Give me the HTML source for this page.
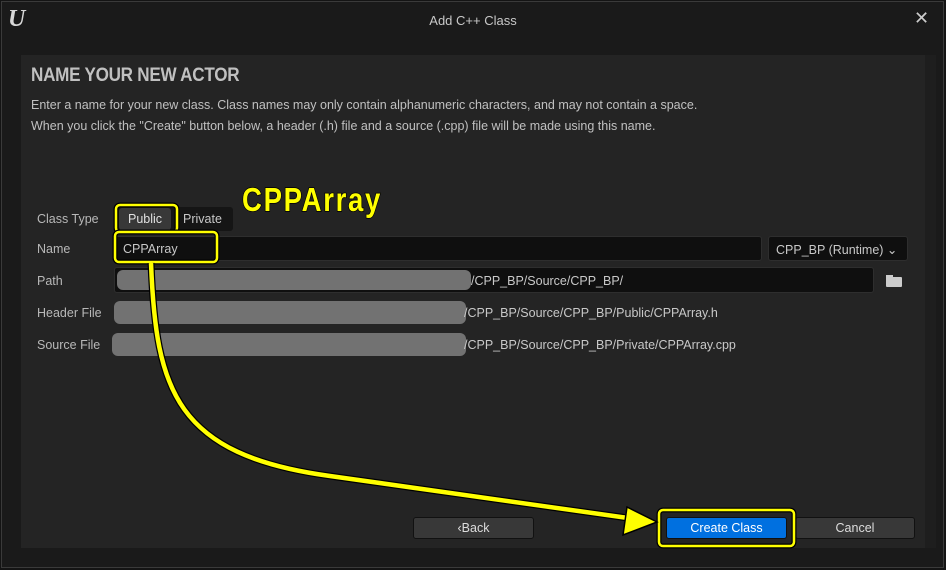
<!DOCTYPE html>
<html><head><style>
body{margin:0;width:946px;height:570px;background:#141414;font-family:"Liberation Sans",sans-serif;overflow:hidden;position:relative}
.win{position:absolute;left:1px;top:1px;width:943px;height:567px;background:#1a1a1a;border:1px solid #3a3a3a;box-sizing:border-box}
.abs{position:absolute}
.title{left:0;right:0;top:13px;text-align:center;color:#c8c8c8;font-size:13px}
.panel{left:21px;top:55px;width:904px;height:493px;background:#242424}
.strip{left:925px;top:55px;width:11px;height:493px;background:#1e1e1e}
h1{position:absolute;left:31px;top:65px;margin:0;font-size:19px;color:#c0c0c0;font-weight:bold;letter-spacing:-0.3px;transform:scaleX(0.9);transform-origin:left}
.desc{left:31px;color:#c0c0c0;font-size:12.5px}
.lbl{left:37px;color:#b8b8b8;font-size:12.5px}
.field{background:#0f0f0f;border:1px solid #2e2e2e;border-radius:3px;box-sizing:border-box}
.blur{background:#727272;border-radius:6px}
.txt{color:#c8c8c8;font-size:12.5px}
.btn{background:#383838;border:1px solid #111;border-radius:3px;color:#ddd;font-size:12.5px;text-align:center;box-sizing:border-box;line-height:20px}
</style></head><body>
<div class="win">
</div>
<div class="abs" style="left:8px;top:6px;color:#d8d8d8;font:bold 24px 'Liberation Serif',serif;font-style:italic">U</div>
<div class="abs title">Add C++ Class</div>
<div class="abs" style="left:914px;top:8px;color:#ccc;font-size:18px">✕</div>
<div class="abs panel"></div>
<div class="abs strip"></div>
<h1>NAME YOUR NEW ACTOR</h1>
<div class="abs desc" style="top:98px">Enter a name for your new class. Class names may only contain alphanumeric characters, and may not contain a space.</div>
<div class="abs desc" style="top:119px">When you click the "Create" button below, a header (.h) file and a source (.cpp) file will be made using this name.</div>

<div class="abs lbl" style="top:212px">Class Type</div>
<div class="abs lbl" style="top:242px">Name</div>
<div class="abs lbl" style="top:274px">Path</div>
<div class="abs lbl" style="top:306px">Header File</div>
<div class="abs lbl" style="top:338px">Source File</div>

<div class="abs" style="left:117px;top:207px;width:116px;height:24px;background:#151515;border-radius:3px"></div>
<div class="abs" style="left:119px;top:208px;width:52px;height:22px;background:#383838;border-radius:3px"></div>
<div class="abs txt" style="left:128px;top:212px;color:#e0e0e0">Public</div>
<div class="abs txt" style="left:183px;top:212px">Private</div>

<div class="abs field" style="left:114px;top:236px;width:648px;height:25px"></div>
<div class="abs txt" style="left:123px;top:242px">CPPArray</div>
<div class="abs field" style="left:768px;top:236px;width:140px;height:25px"></div>
<div class="abs txt" style="left:776px;top:242px">CPP_BP (Runtime) ⌄</div>

<div class="abs field" style="left:114px;top:267px;width:760px;height:26px"></div>
<div class="abs blur" style="left:117px;top:270px;width:354px;height:20px"></div>
<div class="abs txt" style="left:471px;top:274px">/CPP_BP/Source/CPP_BP/</div>
<div class="abs" style="left:886px;top:277px;width:16px;height:10px;background:#ccc;border-radius:1px"></div>
<div class="abs" style="left:886px;top:275px;width:7px;height:3px;background:#ccc"></div>

<div class="abs blur" style="left:114px;top:301px;width:352px;height:23px"></div>
<div class="abs txt" style="left:464px;top:306px">/CPP_BP/Source/CPP_BP/Public/CPPArray.h</div>
<div class="abs blur" style="left:112px;top:333px;width:354px;height:23px"></div>
<div class="abs txt" style="left:464px;top:338px">/CPP_BP/Source/CPP_BP/Private/CPPArray.cpp</div>

<div class="abs btn" style="left:413px;top:517px;width:121px;height:22px">‹Back</div>
<div class="abs btn" style="left:666px;top:517px;width:121px;height:22px;background:#0070e0;color:#fff">Create Class</div>
<div class="abs btn" style="left:795px;top:517px;width:120px;height:22px">Cancel</div>

<svg class="abs" style="left:0;top:0" width="946" height="570">
<g fill="none" stroke-linejoin="round">
<rect x="116" y="205" width="61" height="27" rx="4" stroke="#000" stroke-width="5"/>
<rect x="116" y="205" width="61" height="27" rx="4" stroke="#ffff00" stroke-width="2.5"/>
<rect x="115" y="232" width="102" height="30" rx="4" stroke="#000" stroke-width="5"/>
<rect x="115" y="232" width="102" height="30" rx="4" stroke="#ffff00" stroke-width="2.5"/>
<rect x="659" y="510" width="135" height="36" rx="4" stroke="#000" stroke-width="5"/>
<rect x="659" y="510" width="135" height="36" rx="4" stroke="#ffff00" stroke-width="2.5"/>
<path d="M151 263 C156 390 175 455 330 476 L628 518" stroke="#000" stroke-width="7"/>
<path d="M151 263 C156 390 175 455 330 476 L628 518" stroke="#ffff00" stroke-width="4.5"/>
</g>
<polygon points="657,522 627,507 623,535" fill="#ffff00" stroke="#000" stroke-width="1.5"/>
<text x="242" y="211" font-family="Liberation Sans" font-weight="bold" font-size="33" fill="#ffff00" stroke="#000" stroke-width="1.5" letter-spacing="2" paint-order="stroke" textLength="140" lengthAdjust="spacingAndGlyphs">CPPArray</text>
</svg>
</body></html>
